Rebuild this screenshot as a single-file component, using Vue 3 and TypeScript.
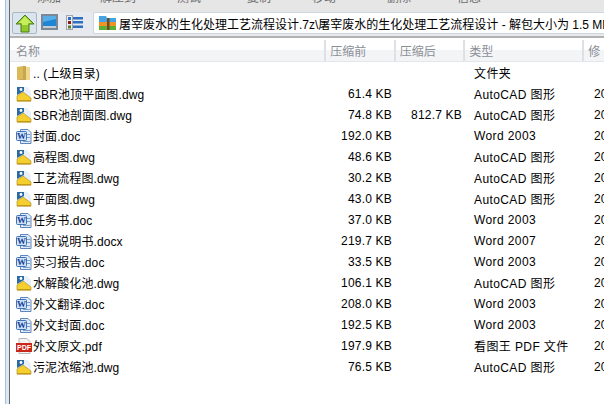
<script setup lang="ts">
type Kind = 'folder' | 'dwg' | 'word' | 'pdf'
interface Row { name: string; kind: Kind; size: string; packed: string; type: string; date: string }
const dwg = 'AutoCAD 图形'
const menus: { t: string; w: number }[] = [
  { t: '添加', w: 63 }, { t: '解压到', w: 77 }, { t: '测试', w: 70 }, { t: '复制', w: 65 },
  { t: '移动', w: 75 }, { t: '删除', w: 70 }, { t: '信息', w: 70 },
]
const rows: Row[] = [
  { name: '.. (上级目录)', kind: 'folder', size: '', packed: '', type: '文件夹', date: '' },
  { name: 'SBR池顶平面图.dwg', kind: 'dwg', size: '61.4 KB', packed: '', type: dwg, date: '20' },
  { name: 'SBR池剖面图.dwg', kind: 'dwg', size: '74.8 KB', packed: '812.7 KB', type: dwg, date: '20' },
  { name: '封面.doc', kind: 'word', size: '192.0 KB', packed: '', type: 'Word 2003', date: '20' },
  { name: '高程图.dwg', kind: 'dwg', size: '48.6 KB', packed: '', type: dwg, date: '20' },
  { name: '工艺流程图.dwg', kind: 'dwg', size: '30.2 KB', packed: '', type: dwg, date: '20' },
  { name: '平面图.dwg', kind: 'dwg', size: '43.0 KB', packed: '', type: dwg, date: '20' },
  { name: '任务书.doc', kind: 'word', size: '37.0 KB', packed: '', type: 'Word 2003', date: '20' },
  { name: '设计说明书.docx', kind: 'word', size: '219.7 KB', packed: '', type: 'Word 2007', date: '20' },
  { name: '实习报告.doc', kind: 'word', size: '33.5 KB', packed: '', type: 'Word 2003', date: '20' },
  { name: '水解酸化池.dwg', kind: 'dwg', size: '106.1 KB', packed: '', type: dwg, date: '20' },
  { name: '外文翻译.doc', kind: 'word', size: '208.0 KB', packed: '', type: 'Word 2003', date: '20' },
  { name: '外文封面.doc', kind: 'word', size: '192.5 KB', packed: '', type: 'Word 2003', date: '20' },
  { name: '外文原文.pdf', kind: 'pdf', size: '197.9 KB', packed: '', type: '看图王 PDF 文件', date: '20' },
  { name: '污泥浓缩池.dwg', kind: 'dwg', size: '76.5 KB', packed: '', type: dwg, date: '20' },
]
</script>

<template>
  <div class="window">
    <div class="chrome"></div>
    <div class="main">
      <div class="menu">
        <span v-for="m in menus" :key="m.t" class="m" :style="{ width: m.w + 'px' }">{{ m.t }}</span>
      </div>
      <div class="toolbar">
        <button class="up">
          <svg width="20" height="19" viewBox="0 0 20 19">
            <path d="M10 1 19 10H14V18H6V10H1Z" fill="#8fc92c" stroke="#4c7d10" stroke-width="1" />
            <path d="M10 2.5 16.5 9H13V11H7V9H3.5Z" fill="#c8ee5e" />
          </svg>
        </button>
        <svg class="tool" width="17" height="16" viewBox="0 0 17 16">
          <rect x="1" y="1" width="15" height="14" fill="#eef1f4" stroke="#7b8794" stroke-width="2" />
          <rect x="2" y="2" width="13" height="10" fill="#1f86d6" />
          <path d="M2 2H15V5L2 8Z" fill="#56ade8" />
          <rect x="2" y="12" width="13" height="2" fill="#c4ccd4" />
        </svg>
        <svg class="tool list" width="17" height="15" viewBox="0 0 17 15">
          <rect x="0.5" y="0.5" width="6" height="14" fill="#eceef0" stroke="#a0a6ac" />
          <rect x="2" y="2" width="3" height="3" fill="#2d6fc0" />
          <rect x="2" y="6" width="3" height="3" fill="#8c1c1c" />
          <rect x="2" y="10.5" width="3" height="3" fill="#5c7f2a" />
          <rect x="7" y="2" width="10" height="2.5" fill="#2d6fc0" />
          <rect x="7" y="6" width="10" height="2.5" fill="#2d6fc0" />
          <rect x="7" y="10.5" width="10" height="2.5" fill="#2d6fc0" />
        </svg>
        <div class="path">
          <svg class="ico" width="17" height="16" viewBox="0 0 17 16">
            <path d="M0 1H7L8 3H17V7H0Z" fill="#45a3e4" />
            <rect x="0" y="7" width="17" height="4" fill="#ee9326" />
            <rect x="0" y="11" width="17" height="4" fill="#5fae34" />
            <rect x="8" y="3" width="2.5" height="12" fill="#6e4a22" />
          </svg>
          <span class="path-text">屠宰废水的生化处理工艺流程设计.7z\屠宰废水的生化处理工艺流程设计 - 解包大小为 1.5 MB</span>
        </div>
      </div>
      <div class="head">
        <div class="c name">名称</div>
        <div class="c size">压缩前</div>
        <div class="c packed">压缩后</div>
        <div class="c type">类型</div>
        <div class="c date">修</div>
      </div>
      <div class="list-body">
        <div v-for="r in rows" :key="r.name" class="row">
          <div class="name cell">
            <svg v-if="r.kind === 'folder'" class="ico" width="16" height="16" viewBox="0 0 16 16">
              <path d="M1 2 7 1V13L1 15Z" fill="#d9b95a" />
              <path d="M7 1H10V15H1L7 13Z" fill="#c7a650" />
              <path d="M10 2H14V15H10Z" fill="#f0d88e" />
            </svg>
            <svg v-else-if="r.kind === 'dwg'" class="ico" width="16" height="16" viewBox="0 0 16 16">
              <path d="M1 1H11L15 5V15H1Z" fill="#e9f0f7" />
              <path d="M1 1H8V5L1 9Z" fill="#2b6aa0" />
              <circle cx="5" cy="3.5" r="1.4" fill="#fff" />
              <path d="M1 10 7 6 15 12V15H1Z" fill="#f5cf2e" stroke="#a8861a" stroke-width="0.6" />
              <path d="M1 14H15V15.5H1Z" fill="#c49b1c" />
            </svg>
            <svg v-else-if="r.kind === 'word'" class="ico" width="16" height="16" viewBox="0 0 16 16">
              <path d="M4.5 1.5H12L15 4.5V15.5H4.5Z" fill="#dfeafa" stroke="#5f86b8" />
              <rect x="11" y="6" width="3" height="1" fill="#7f9fc8" />
              <rect x="11" y="9" width="3" height="1" fill="#7f9fc8" />
              <rect x="7" y="13" width="7" height="1" fill="#7f9fc8" />
              <rect x="0.5" y="3.5" width="10" height="9" rx="1" fill="#cfe0f6" stroke="#3f72b4" />
              <text x="5.5" y="11" class="word-w">W</text>
            </svg>
            <svg v-else class="ico" width="16" height="16" viewBox="0 0 16 16">
              <path d="M3 0.5H11L14 3.5V15.5H3Z" fill="#f3f3f3" stroke="#b8b8b8" />
              <rect x="0" y="5" width="16" height="9" fill="#c9261c" />
              <text x="8" y="12" class="pdf-t">PDF</text>
            </svg>
            <span class="label">{{ r.name }}</span>
          </div>
          <div class="size cell num">{{ r.size }}</div>
          <div class="packed cell num">{{ r.packed }}</div>
          <div class="type cell">{{ r.type }}</div>
          <div class="date cell">{{ r.date }}</div>
        </div>
      </div>
    </div>
  </div>
</template>

<style>
html, body { margin: 0; background: #fff; overflow: hidden; }
</style>

<style scoped>
.window {
  width: 604px;
  height: 404px;
  display: flex;
  overflow: hidden;
  font-family: "Liberation Sans", "Noto Sans CJK SC", sans-serif;
  font-size: 12px;
  color: #1a1a1a;
  background: #fff;
}
.chrome {
  width: 3px;
  flex: none;
  margin-left: 5px;
  border-left: 1px solid #9ec3e6;
  border-right: 1px solid #5f6a76;
  background: #dfe6ee;
  box-sizing: content-box;
}
.main { flex: 1; min-width: 0; display: flex; flex-direction: column; }
.menu {
  height: 12px;
  padding-left: 27px;
  background: #e6e6e6;
  display: flex;
  overflow: hidden;
  flex: none;
}
.m { flex: none; margin-top: -9px; font-size: 12px; line-height: 14px; color: #6c6c6c; }
.toolbar {
  height: 24px;
  padding-left: 2px;
  display: flex;
  align-items: flex-start;
  background: #e6e9ed;
  border-bottom: 2px solid #b2b2b2;
  flex: none;
}
.up {
  width: 25px;
  height: 22px;
  padding: 0;
  margin: 0 4px 0 0;
  display: flex;
  align-items: center;
  justify-content: center;
  border: 1px solid #a9b6c3;
  border-radius: 2px;
  background: #dae4ee;
}
.tool { flex: none; margin-right: 8px; margin-top: 2px; }
.tool.list { margin-right: 10px; margin-top: 3px; }
.path {
  flex: 1;
  min-width: 0;
  height: 22px;
  box-sizing: border-box;
  display: flex;
  align-items: center;
  gap: 3px;
  padding-left: 5px;
  background: #fff;
  border: 1px solid #cfd6dd;
  border-right: 0;
  border-radius: 2px 0 0 2px;
  overflow: hidden;
  white-space: nowrap;
}
.path-text { color: #000; }
.head {
  height: 24px;
  display: flex;
  background: linear-gradient(#fff 0, #fff 50%, #f3f4f6 54%, #f3f4f6 100%);
  border-bottom: 1px solid #e3e6ea;
  box-sizing: border-box;
  color: #8a8f96;
  flex: none;
}
.c { display: flex; align-items: center; box-sizing: border-box; border-right: 2px solid #dde1e6; margin-top: 2px; }
.head .name { width: 319px; padding-left: 6px; }
.head .size { width: 70px; padding-left: 4px; }
.head .packed { width: 70px; padding-left: 4px; }
.head .type { width: 120px; padding-left: 4px; }
.head .date { width: 20px; padding-left: 4px; border-right: 0; }
.list-body { flex: 1; color: #000; }
.row { height: 21px; display: flex; align-items: center; }
.cell { box-sizing: border-box; white-space: nowrap; flex: none; }
.row .name { width: 312px; padding-left: 6px; display: flex; align-items: center; gap: 1px; }
.ico { flex: none; }
.label { color: #000; letter-spacing: 0.1px; }
.word-w { font: bold 9px "Liberation Serif", serif; fill: #123f96; text-anchor: middle; }
.pdf-t { font: bold 7px "Liberation Sans", sans-serif; fill: #fff; text-anchor: middle; }
.row .size { width: 70px; text-align: right; letter-spacing: 0.2px; }
.row .packed { width: 70px; text-align: right; letter-spacing: 0.2px; }
.row .type { width: 132px; padding-left: 12px; letter-spacing: 0.4px; }
.row .date { width: 20px; padding-left: 0; }
</style>
